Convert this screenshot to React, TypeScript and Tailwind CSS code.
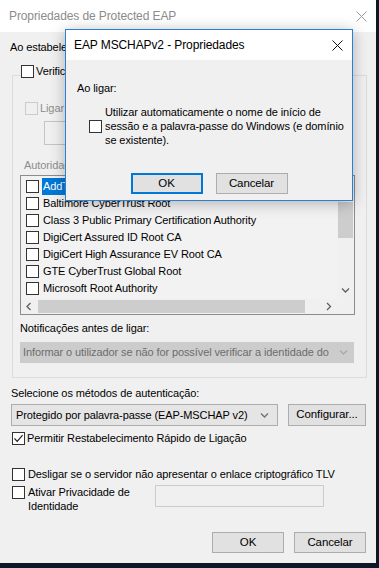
import React from "react"

const CERTS = [
  "AddTrust External CA Root",
  "Baltimore CyberTrust Root",
  "Class 3 Public Primary Certification Authority",
  "DigiCert Assured ID Root CA",
  "DigiCert High Assurance EV Root CA",
  "GTE CyberTrust Global Root",
  "Microsoft Root Authority",
]

function Box({ checked = false, disabled = false }: { checked?: boolean; disabled?: boolean }) {
  return (
    <span
      className={`w-[13px] h-[13px] shrink-0 border flex items-center justify-center ${
        disabled ? "border-[#cccccc] bg-[#f0f0f0]" : "border-[#333333] bg-white"
      }`}
    >
      {checked && (
        <svg width="11" height="11" viewBox="0 0 11 11">
          <path d="M1.5 5.5 L4.2 8.3 L9.6 2.2" fill="none" stroke="#222" strokeWidth="1.2" />
        </svg>
      )}
    </span>
  )
}

function Cross({ color }: { color: string }) {
  return (
    <svg width="11" height="11" viewBox="0 0 11 11">
      <path d="M0.5 0.5 L10.5 10.5 M10.5 0.5 L0.5 10.5" stroke={color} strokeWidth="1" />
    </svg>
  )
}

function Chevron({ dir, color }: { dir: "down" | "left" | "right"; color: string }) {
  const d =
    dir === "down" ? "M1 2.5 L4.5 6 L8 2.5" : dir === "left" ? "M5.5 1 L2 4.5 L5.5 8" : "M3 1 L6.5 4.5 L3 8"
  return (
    <svg width="9" height="9" viewBox="0 0 9 9">
      <path d={d} fill="none" stroke={color} strokeWidth="1.3" />
    </svg>
  )
}

function Button({ label, focused = false }: { label: string; focused?: boolean }) {
  return (
    <div
      className={`w-[72px] h-[21px] flex items-center justify-center bg-[#e1e1e1] text-[11.5px] text-black ${
        focused ? "border-2 border-[#0078d7]" : "border border-[#adadad]"
      }`}
    >
      {label}
    </div>
  )
}

function MschapDialog() {
  return (
    <div className="absolute left-[65px] top-[29px] w-[288px] h-[172px] border border-[#2b7fd4] bg-[#f0f0f0] shadow-[0_2px_14px_rgba(0,0,0,0.28)] flex flex-col">
      <div className="h-[30px] bg-white flex items-center justify-between pl-[8px] pr-[9px]">
        <span className="text-[12px] text-black">EAP MSCHAPv2 - Propriedades</span>
        <Cross color="#111" />
      </div>
      <div className="mt-[21px] pl-[11px] text-[11px] leading-[15px] text-black">Ao ligar:</div>
      <div className="mt-[9px] pl-[23px] flex items-center gap-[3px]">
        <Box />
        <p className="w-[245px] text-[11px] leading-[14px] tracking-[-0.1px] text-black">
          Utilizar automaticamente o nome de início de sessão e a palavra-passe do Windows (e domínio se existente).
        </p>
      </div>
      <div className="mt-[26px] flex justify-center gap-[13px]">
        <Button label="OK" focused />
        <Button label="Cancelar" />
      </div>
    </div>
  )
}

export default function App() {
  return (
    <div className="relative w-[379px] h-[568px] overflow-hidden bg-[#0e1726] font-['Liberation_Sans',Arial,sans-serif] tracking-[-0.1px]">
      <div className="w-[376px] h-[563px] bg-[#f0f0f0] flex flex-col">
        {/* Title bar */}
        <div className="h-[32px] shrink-0 bg-white flex items-center justify-between pl-[9px] pr-[9px]">
          <span className="text-[12px] text-[#8c8c8c]">Propriedades de Protected EAP</span>
          <Cross color="#9a9a9a" />
        </div>

        <div className="mt-[8px] ml-[10px] text-[11px] leading-[15px] text-black">Ao estabelecer ligação:</div>

        {/* Group box */}
        <div className="mt-[20px] ml-[12px] w-[355px] border border-[#dcdcdc] flex flex-col">
          <div className="-mt-[12px] ml-[8px] flex items-center gap-[2px] self-start bg-[#f0f0f0] pr-[3px]">
            <Box />
            <span className="text-[11px] leading-[15px] text-black">
              Verificar a identidade do servidor validando o certificado
            </span>
          </div>

          <div className="mt-[22px] ml-[12px] flex items-center gap-[2px]">
            <Box disabled />
            <span className="text-[11px] leading-[15px] text-[#8d8d8d]">Ligar a estes servidores (exemplos:srv1;srv2;.*\.srv3\.com):</span>
          </div>

          <div className="mt-[5px] ml-[31px] w-[309px] h-[24px] border border-[#c4c4c4] bg-[#f0f0f0]" />

          <div className="mt-[13px] ml-[11px] text-[11px] leading-[15px] text-[#8d8d8d]">
            Autoridades de certificação de raiz fidedigna:
          </div>

          {/* List */}
          <div className="mt-[2px] ml-[7px] w-[335px] h-[140px] border border-[#8c8c8c] bg-[#f2f2f2] flex flex-col">
            <div className="flex h-[123px]">
              <div className="flex-1 pt-[2px] flex flex-col">
                {CERTS.map((c, i) => (
                  <div key={c} className="h-[17px] flex items-center pl-[5px] gap-[3px]">
                    <Box />
                    <span
                      className={`text-[11px] leading-[17px] px-[1px] whitespace-nowrap ${
                        i === 0 ? "bg-[#0078d7] text-white" : "text-black"
                      }`}
                    >
                      {c}
                    </span>
                  </div>
                ))}
              </div>
              <div className="w-[17px] flex flex-col bg-[#f0f0f0]">
                <div className="h-[17px] flex items-center justify-center">
                  <svg width="9" height="9" viewBox="0 0 9 9">
                    <path d="M1 6 L4.5 2.5 L8 6" fill="none" stroke="#606060" strokeWidth="1.3" />
                  </svg>
                </div>
                <div className="flex-1 px-[1px] pt-[9px]">
                  <div className="h-[36px] bg-[#cdcdcd]" />
                </div>
                <div className="h-[17px] flex items-center justify-center">
                  <Chevron dir="down" color="#606060" />
                </div>
              </div>
            </div>
            <div className="h-[15px] flex bg-[#f0f0f0]">
              <div className="w-[17px] flex items-center justify-center">
                <Chevron dir="left" color="#606060" />
              </div>
              <div className="flex-1 py-[1px] pr-[15px]">
                <div className="h-full bg-[#cdcdcd]" />
              </div>
              <div className="w-[17px] flex items-center justify-center">
                <Chevron dir="right" color="#606060" />
              </div>
              <div className="w-[17px]" />
            </div>
          </div>

          <div className="mt-[6px] ml-[7px] text-[11px] leading-[15px] text-black">Notificações antes de ligar:</div>

          <div className="mt-[6px] mb-[14px] ml-[7px] w-[334px] h-[21px] bg-[#cccccc] flex items-center justify-between pl-[3px] pr-[6px]">
            <span className="text-[11px] text-[#6d6d6d] whitespace-nowrap overflow-hidden">
              Informar o utilizador se não for possível verificar a identidade do
            </span>
            <Chevron dir="down" color="#a8a8a8" />
          </div>
        </div>

        <div className="mt-[8px] ml-[11px] text-[11px] leading-[15px] text-black">
          Selecione os métodos de autenticação:
        </div>

        <div className="mt-[3px] ml-[11px] flex gap-[10px]">
          <div className="w-[267px] h-[22px] border border-[#adadad] bg-[#e5e5e5] flex items-center justify-between pl-[4px] pr-[8px]">
            <span className="text-[11px] text-black whitespace-nowrap">Protegido por palavra-passe (EAP-MSCHAP v2)</span>
            <Chevron dir="down" color="#707070" />
          </div>
          <div className="w-[78px] h-[22px] border border-[#adadad] bg-[#e1e1e1] flex items-center justify-center text-[11.5px] text-black">
            Configurar...
          </div>
        </div>

        <div className="mt-[5px] ml-[12px] flex items-center gap-[2px]">
          <Box checked />
          <span className="text-[11px] leading-[15px] text-black">Permitir Restabelecimento Rápido de Ligação</span>
        </div>

        <div className="mt-[21px] ml-[12px] flex items-center gap-[3px]">
          <Box />
          <span className="text-[11px] leading-[15px] text-black">
            Desligar se o servidor não apresentar o enlace criptográfico TLV
          </span>
        </div>

        <div className="mt-[3px] ml-[12px] flex items-start">
          <div className="mt-[1px]">
            <Box />
          </div>
          <p className="ml-[3px] w-[115px] text-[11px] leading-[14px] text-black">
            Ativar Privacidade de
            <br />
            Identidade
          </p>
          <div className="ml-[12px] w-[169px] h-[22px] border border-[#cccccc] bg-[#f0f0f0]" />
        </div>

        <div className="mt-[19px] mr-[10px] flex justify-end gap-[10px]">
          <Button label="OK" />
          <Button label="Cancelar" />
        </div>
      </div>

      <MschapDialog />
    </div>
  )
}
